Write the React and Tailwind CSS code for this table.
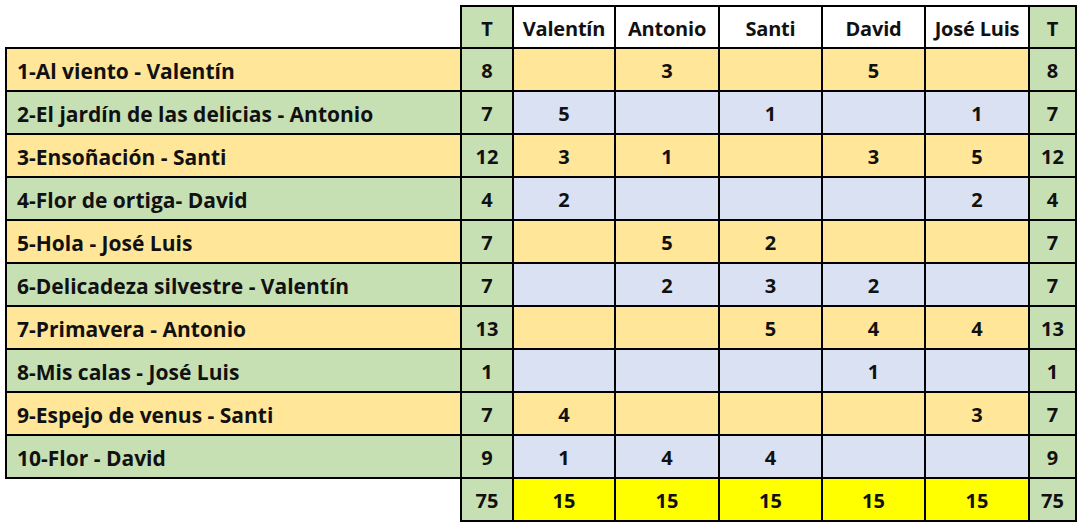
const players = ['Valentín', 'Antonio', 'Santi', 'David', 'José Luis'];

const rows = [
  { name: '1-Al viento - Valentín', total: 8, votes: ['', 3, '', 5, ''] },
  { name: '2-El jardín de las delicias - Antonio', total: 7, votes: [5, '', 1, '', 1] },
  { name: '3-Ensoñación - Santi', total: 12, votes: [3, 1, '', 3, 5] },
  { name: '4-Flor de ortiga- David', total: 4, votes: [2, '', '', '', 2] },
  { name: '5-Hola - José Luis', total: 7, votes: ['', 5, 2, '', ''] },
  { name: '6-Delicadeza silvestre - Valentín', total: 7, votes: ['', 2, 3, 2, ''] },
  { name: '7-Primavera - Antonio', total: 13, votes: ['', '', 5, 4, 4] },
  { name: '8-Mis calas - José Luis', total: 1, votes: ['', '', '', 1, ''] },
  { name: '9-Espejo de venus - Santi', total: 7, votes: [4, '', '', '', 3] },
  { name: '10-Flor - David', total: 9, votes: [1, 4, 4, '', ''] },
];

const cell = 'border-2 border-black text-center pt-[3px] leading-none';

const App = () => {
  return (
    <div
      className="w-[1080px] h-[527px] bg-white pl-[5px] pt-[5px] text-[20px] font-bold text-[#111]"
      style={{ fontFamily: '"Open Sans", Lato, sans-serif' }}
    >
      <table className="table-fixed border-collapse">
        <colgroup>
          <col className="w-[455px]" />
          <col className="w-[52px]" />
          <col className="w-[102px]" />
          <col className="w-[104px]" />
          <col className="w-[103px]" />
          <col className="w-[103px]" />
          <col className="w-[104px]" />
          <col className="w-[47px]" />
        </colgroup>
        <thead>
          <tr className="h-[42px]">
            <th className="border-0"></th>
            <th className={`${cell} bg-[#c6e0b4]`}>T</th>
            {players.map((p) => (
              <th key={p} className={`${cell} bg-white tracking-[-0.2px]`}>
                {p}
              </th>
            ))}
            <th className={`${cell} bg-[#c6e0b4]`}>T</th>
          </tr>
        </thead>
        <tbody>
          {rows.map((r, i) => {
            const odd = i % 2 === 0;
            return (
              <tr key={r.name} className="h-[43px]">
                <td
                  className={`border-2 border-black text-left pl-[10px] pt-[3px] leading-none text-[21px] ${
                    odd ? 'bg-[#ffe699]' : 'bg-[#c6e0b4]'
                  }`}
                >
                  {r.name}
                </td>
                <td className={`${cell} bg-[#c6e0b4]`}>{r.total}</td>
                {r.votes.map((v, j) => (
                  <td key={j} className={`${cell} ${odd ? 'bg-[#ffe699]' : 'bg-[#d9e1f2]'}`}>
                    {v}
                  </td>
                ))}
                <td className={`${cell} bg-[#c6e0b4]`}>{r.total}</td>
              </tr>
            );
          })}
          <tr className="h-[43px]">
            <td className="border-0"></td>
            <td className={`${cell} bg-[#c6e0b4]`}>75</td>
            {players.map((p) => (
              <td key={p} className={`${cell} bg-[#ffff00]`}>
                15
              </td>
            ))}
            <td className={`${cell} bg-[#c6e0b4]`}>75</td>
          </tr>
        </tbody>
      </table>
    </div>
  );
};

export default App;
